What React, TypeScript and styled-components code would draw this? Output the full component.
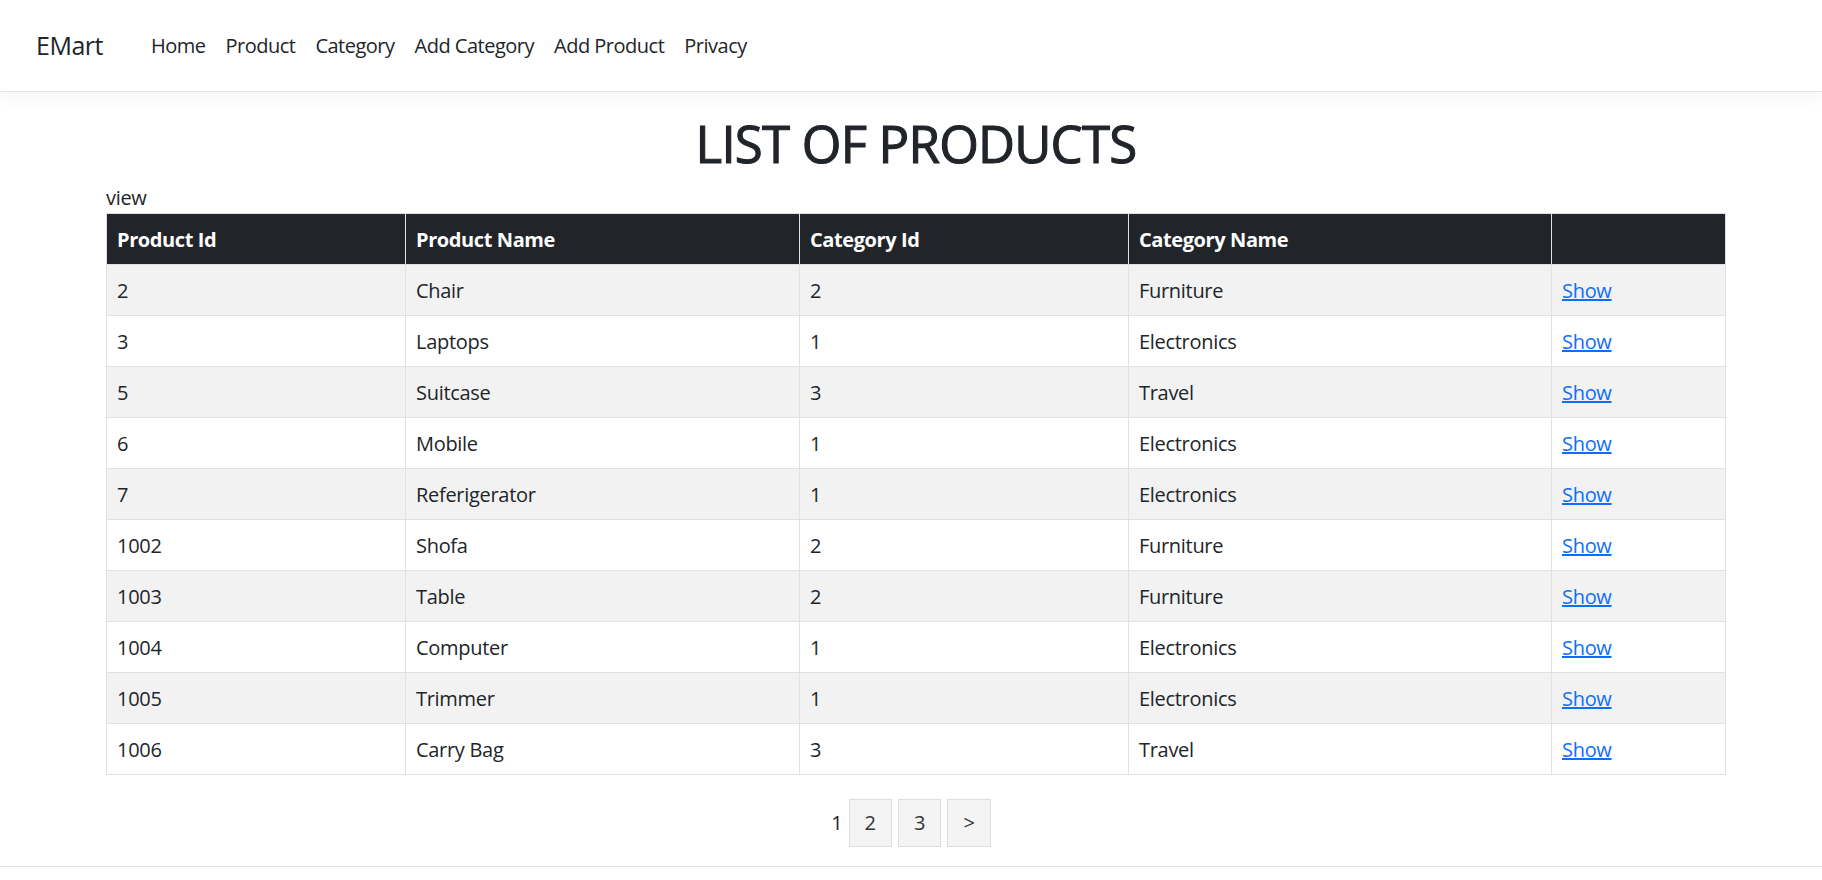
import React from "react";
import styled, { createGlobalStyle } from "styled-components";

const GlobalStyle = createGlobalStyle`
  html, body { margin: 0; padding: 0; background: #fff; }
  body {
    font-family: "Open Sans", "Noto Sans", "Liberation Sans", sans-serif;
    font-size: 20px;
    line-height: 1.5;
    color: #212529;
  }
  * { box-sizing: border-box; }
`;

const Navbar = styled.header`
  height: 92px;
  display: flex;
  align-items: center;
  padding-left: 36px;
  background: #fff;
  border-bottom: 1px solid #e3e3e3;
  box-shadow: 0 5px 15px rgba(0, 0, 0, 0.05);
`;

const Brand = styled.a`
  font-size: 25px;
  line-height: 1.5;
  color: #212529;
  text-decoration: none;
  margin-right: 38px;
  letter-spacing: -0.5px;
`;

const NavList = styled.nav`
  display: flex;
  align-items: center;
`;

const NavLink = styled.a`
  padding: 0 10px;
  font-size: 20px;
  color: #212529;
  text-decoration: none;
  letter-spacing: -0.5px;
`;

const Main = styled.main`
  margin: 0 96px 0 106px;
  padding-top: 21px;
`;

const Title = styled.h1`
  margin: 0 0 10px;
  text-align: center;
  font-size: 51px;
  line-height: 60px;
  font-weight: 400;
  letter-spacing: -0.8px;
  -webkit-text-stroke: 1.1px #212529;
`;

const ViewLabel = styled.div`
  line-height: 30px;
  letter-spacing: -0.3px;
`;

const Table = styled.table`
  width: 100%;
  border-collapse: collapse;
  table-layout: fixed;
  border: 1px solid #dee2e6;
`;

const HeadCell = styled.th`
  background: #212529;
  color: #fff;
  font-weight: 700;
  text-align: left;
  padding: 11px 10px 9px;
  line-height: 30px;
  border: 1px solid #dee2e6;
  letter-spacing: -0.4px;
`;

const Row = styled.tr<{ $striped: boolean }>`
  background: ${(p) => (p.$striped ? "#f2f2f2" : "#fff")};
`;

const Cell = styled.td`
  padding: 11px 10px 9px;
  line-height: 30px;
  border: 1px solid #dee2e6;
  letter-spacing: -0.3px;
`;

const ShowLink = styled.a`
  color: #0d6efd;
  text-decoration: underline;
`;

const Pagination = styled.div`
  margin-top: 24px;
  padding-right: 10px;
  display: flex;
  justify-content: center;
  align-items: center;
  gap: 6px;
`;

const CurrentPage = styled.span`
  line-height: 30px;
`;

const PageBox = styled.a`
  display: inline-block;
  padding: 8px 15px;
  line-height: 30px;
  background: #f4f4f4;
  border: 1px solid #dddddd;
  color: #333;
  text-decoration: none;
`;

const Footer = styled.footer`
  margin-top: 19px;
  border-top: 1px solid #dee2e6;
  height: 60px;
`;

const products = [
  { id: "2", name: "Chair", catId: "2", cat: "Furniture" },
  { id: "3", name: "Laptops", catId: "1", cat: "Electronics" },
  { id: "5", name: "Suitcase", catId: "3", cat: "Travel" },
  { id: "6", name: "Mobile", catId: "1", cat: "Electronics" },
  { id: "7", name: "Referigerator", catId: "1", cat: "Electronics" },
  { id: "1002", name: "Shofa", catId: "2", cat: "Furniture" },
  { id: "1003", name: "Table", catId: "2", cat: "Furniture" },
  { id: "1004", name: "Computer", catId: "1", cat: "Electronics" },
  { id: "1005", name: "Trimmer", catId: "1", cat: "Electronics" },
  { id: "1006", name: "Carry Bag", catId: "3", cat: "Travel" },
];

const navItems = ["Home", "Product", "Category", "Add Category", "Add Product", "Privacy"];

export default function App() {
  return (
    <>
      <GlobalStyle />
      <Navbar>
        <Brand href="#">EMart</Brand>
        <NavList>
          {navItems.map((n) => (
            <NavLink key={n} href="#">
              {n}
            </NavLink>
          ))}
        </NavList>
      </Navbar>
      <Main>
        <Title>LIST OF PRODUCTS</Title>
        <ViewLabel>view</ViewLabel>
        <Table>
          <colgroup>
            <col style={{ width: 299 }} />
            <col style={{ width: 394 }} />
            <col style={{ width: 329 }} />
            <col style={{ width: 423 }} />
            <col />
          </colgroup>
          <thead>
            <tr>
              <HeadCell>Product Id</HeadCell>
              <HeadCell>Product Name</HeadCell>
              <HeadCell>Category Id</HeadCell>
              <HeadCell>Category Name</HeadCell>
              <HeadCell></HeadCell>
            </tr>
          </thead>
          <tbody>
            {products.map((p, i) => (
              <Row key={p.id} $striped={i % 2 === 0}>
                <Cell>{p.id}</Cell>
                <Cell>{p.name}</Cell>
                <Cell>{p.catId}</Cell>
                <Cell>{p.cat}</Cell>
                <Cell>
                  <ShowLink href="#">Show</ShowLink>
                </Cell>
              </Row>
            ))}
          </tbody>
        </Table>
        <Pagination>
          <CurrentPage>1</CurrentPage>
          <PageBox href="#">2</PageBox>
          <PageBox href="#">3</PageBox>
          <PageBox href="#">&gt;</PageBox>
        </Pagination>
      </Main>
      <Footer />
    </>
  );
}
